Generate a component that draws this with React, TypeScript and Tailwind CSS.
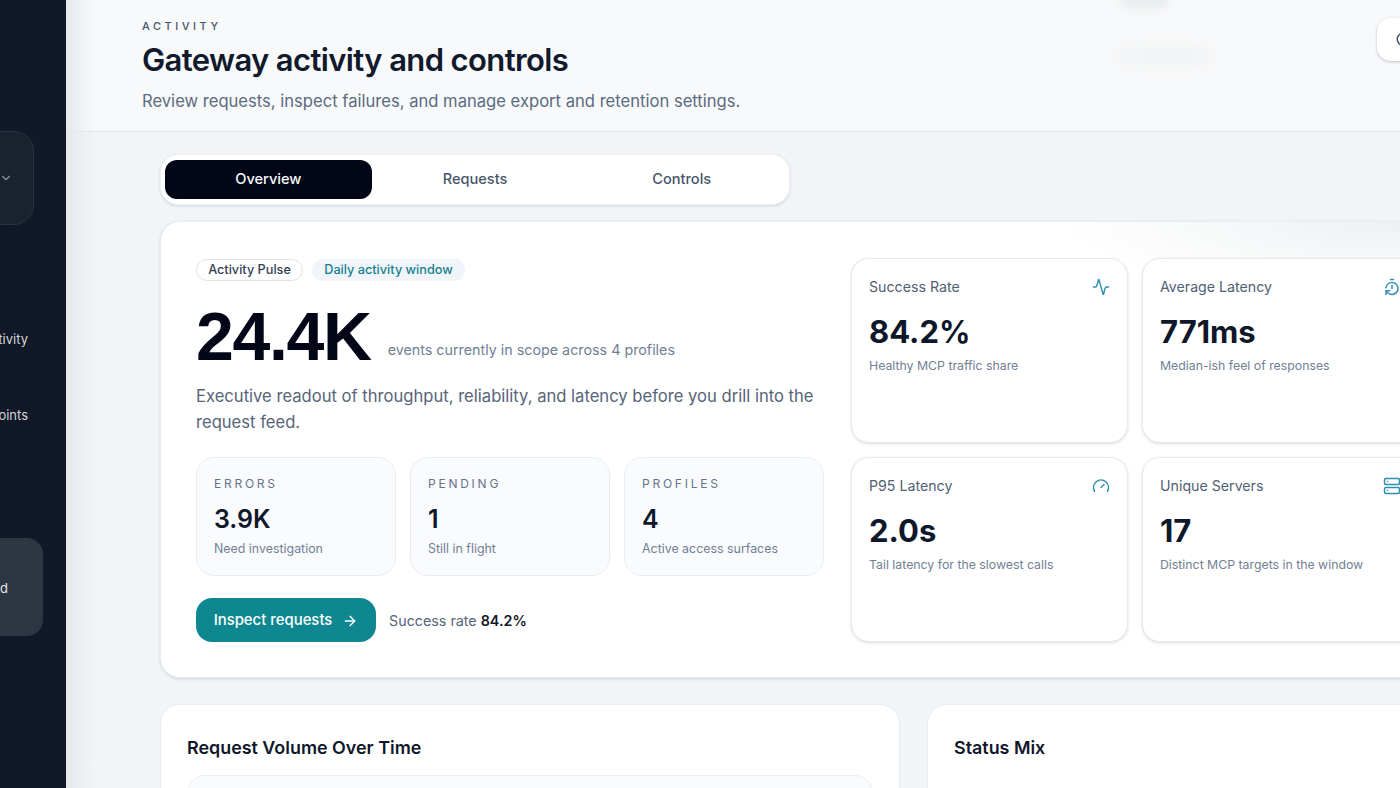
import React from 'react'
import { Activity, ArrowRight, ChevronDown, Gauge, Search, Server, TimerReset } from 'lucide-react'

const miniStats = [
    { label: 'ERRORS', value: '3.9K', note: 'Need investigation' },
    { label: 'PENDING', value: '1', note: 'Still in flight' },
    { label: 'PROFILES', value: '4', note: 'Active access surfaces' },
]

const kpis = [
    { label: 'Success Rate', value: '84.2%', note: 'Healthy MCP traffic share', Icon: Activity },
    { label: 'Average Latency', value: '771ms', note: 'Median-ish feel of responses', Icon: TimerReset },
    { label: 'P95 Latency', value: '2.0s', note: 'Tail latency for the slowest calls', Icon: Gauge },
    { label: 'Unique Servers', value: '17', note: 'Distinct MCP targets in the window', Icon: Server },
]

const Sidebar = () => (
    <aside className="w-[66px] shrink-0 h-full bg-[#111827] flex flex-col items-end overflow-hidden">
        <div className="mt-[131px] mr-[32px] w-[80px] h-[94px] shrink-0 rounded-[20px] bg-[#1a2230] border border-[#2a3343] flex items-center justify-end pr-[20px]">
            <ChevronDown className="w-[14px] h-[14px] text-[#8b94a5]" />
        </div>
        <p className="mt-[105px] mr-[38px] text-[13px] leading-[18px] text-[#d1d5db] whitespace-nowrap">Activity</p>
        <p className="mt-[58px] mr-[38px] text-[13px] leading-[18px] text-[#d1d5db] whitespace-nowrap">Endpoints</p>
        <div className="mt-[114px] mr-[23px] w-[80px] h-[98px] shrink-0 rounded-[16px] bg-[#2e3644] flex items-center pl-[37px] pt-[4px]">
            <span className="text-[13px] text-[#e5e7eb]">d</span>
        </div>
    </aside>
)

const Header = () => (
    <header className="relative h-[132px] shrink-0 bg-[#f8f9fa] border-b border-[#dfe4ea] pl-[76px] pt-[19px]">
        <p className="text-[11px] leading-[14px] tracking-[0.32em] font-medium text-[#475569]">ACTIVITY</p>
        <h1 className="mt-[7px] text-[31px] leading-[40px] font-semibold tracking-[-0.02em] text-[#111a2c]">Gateway activity and controls</h1>
        <p className="mt-[9px] text-[16.6px] leading-[24px] text-[#5b6b80]">Review requests, inspect failures, and manage export and retention settings.</p>
        <div className="absolute left-[1054px] top-[46px] w-[90px] h-[20px] rounded-full bg-[#f1f3f5] blur-[6px]" />
        <div className="absolute left-[1054px] -top-[8px] w-[50px] h-[16px] rounded-full bg-[#e9ecef] blur-[5px]" />
        <button className="absolute left-[1311px] top-[18px] w-[60px] h-[43px] rounded-[14px] bg-white shadow-[0_1px_3px_rgba(15,23,42,0.25)] flex items-center pl-[18px]">
            <Search className="w-[18px] h-[18px] text-[#475569]" />
        </button>
    </header>
)

const Tabs = () => (
    <div className="w-[630px] h-[51px] rounded-[18px] bg-white border border-[#edf0f4] shadow-[0_1px_3px_rgba(15,23,42,0.14)] flex items-center px-[4px] text-[14.6px]">
        <button className="w-[207px] h-[39px] pt-[1px] rounded-[12px] bg-[#020617] text-[#f8fafc] font-medium">Overview</button>
        <button className="w-[207px] h-[39px] pt-[1px] text-[#475569] font-medium">Requests</button>
        <button className="w-[207px] h-[39px] pt-[1px] text-[#475569] font-medium">Controls</button>
    </div>
)

const MiniStat = ({ label, value, note }: { label: string; value: string; note: string }) => (
    <div className="w-[200px] h-[119px] rounded-[18px] bg-[#fafbfd] border border-[#e9edf2] pl-[17px] pt-[18px]">
        <p className="text-[12px] leading-[16px] tracking-[0.23em] text-[#64748b]">{label}</p>
        <p className="mt-[10px] text-[25px] leading-[34px] font-semibold text-[#0f172a]">{value}</p>
        <p className="mt-[4px] text-[12.4px] leading-[18px] text-[#708095]">{note}</p>
    </div>
)

const KpiCard = ({ label, value, note, Icon }: { label: string; value: string; note: string; Icon: typeof Activity }) => (
    <div className="w-[277px] h-[185px] rounded-[18px] bg-white border border-[#e6eaef] shadow-[0_1px_3px_rgba(15,23,42,0.14)] px-[17px] pt-[18px]">
        <div className="flex items-center justify-between h-[20px]">
            <span className="text-[14.2px] text-[#526074]">{label}</span>
            <Icon className="w-[18px] h-[18px] text-[#2f8fb0]" strokeWidth={2} />
        </div>
        <p className="mt-[14px] text-[31px] leading-[42px] font-bold text-[#0f172a]">{value}</p>
        <p className="mt-[4px] text-[12.3px] leading-[18px] text-[#708095]">{note}</p>
    </div>
)

const HeroCard = () => (
    <section className="mt-[16px] w-[1300px] h-[457px] shrink-0 rounded-[20px] bg-white bg-[radial-gradient(340px_70px_at_1240px_0px,#edf0f2,transparent)] border border-[#e9edf1] shadow-[0_1px_3px_rgba(15,23,42,0.14)] pl-[35px] pt-[36px] flex gap-[27px]">
        <div className="w-[628px] shrink-0 pt-[1px]">
            <div className="flex items-center gap-[9px] text-[12.7px] font-medium">
                <span className="h-[22px] w-[107px] justify-center rounded-full border border-[#dfe3e8] text-[#334155] flex items-center">Activity Pulse</span>
                <span className="h-[22px] w-[153px] justify-center rounded-full bg-[#f1f5f9] text-[#13808f] flex items-center">Daily activity window</span>
            </div>
            <div className="mt-[20px] flex items-end gap-[17px]">
                <span className="text-[68px] leading-[70px] font-bold tracking-[-0.02em] text-[#020617] font-['Liberation_Sans',sans-serif]">24.4K</span>
                <span className="pb-[10px] text-[14.3px] leading-[22px] text-[#708095]">events currently in scope across 4 profiles</span>
            </div>
            <p className="mt-[12px] text-[16.6px] leading-[26px] text-[#566579]">Executive readout of throughput, reliability, and latency before you drill into the request feed.</p>
            <div className="mt-[22px] flex gap-[14px]">
                {miniStats.map(s => <MiniStat key={s.label} {...s} />)}
            </div>
            <div className="mt-[22px] flex items-center gap-[13px]">
                <button className="w-[180px] h-[44px] pt-[1px] rounded-[16px] bg-[#0e8791] text-white text-[14.9px] font-medium flex items-center justify-center gap-[10px]">
                    Inspect requests <ArrowRight className="w-[16px] h-[16px]" />
                </button>
                <span className="pt-[1px] text-[14.3px] text-[#566579]">Success rate <b className="font-semibold text-[#0f172a]">84.2%</b></span>
            </div>
        </div>
        <div className="grid grid-cols-[277px_277px] gap-[14px] content-start">
            {kpis.map(k => <KpiCard key={k.label} {...k} />)}
        </div>
    </section>
)

const App = () => (
    <div className="relative w-[1400px] h-[788px] overflow-hidden flex bg-[#f1f5f8] font-['Inter','Noto_Sans',sans-serif]">
        <Sidebar />
        <main className="relative flex-1 min-w-0 flex flex-col overflow-hidden">
            <Header />
            <div className="pl-[94px] pt-[22px] flex flex-col">
                <Tabs />
                <HeroCard />
                <div className="mt-[26px] flex gap-[27px]">
                    <section className="w-[740px] h-[200px] shrink-0 rounded-[20px] bg-white border border-[#e9edf1] px-[26px] pt-[30px]">
                        <h2 className="text-[17.9px] leading-[26px] font-semibold text-[#0f172a]">Request Volume Over Time</h2>
                        <div className="mt-[14px] h-[100px] rounded-[18px] bg-[#fafbfd] border border-[#e9edf2]" />
                    </section>
                    <section className="w-[500px] h-[200px] shrink-0 rounded-[20px] bg-white border border-[#e9edf1] px-[26px] pt-[30px]">
                        <h2 className="text-[17.9px] leading-[26px] font-semibold text-[#0f172a]">Status Mix</h2>
                    </section>
                </div>
            </div>
            <div className="absolute left-0 top-0 w-[30px] h-full bg-gradient-to-r from-[#e6e9ec] to-transparent pointer-events-none" />
        </main>
    </div>
)

export default App
